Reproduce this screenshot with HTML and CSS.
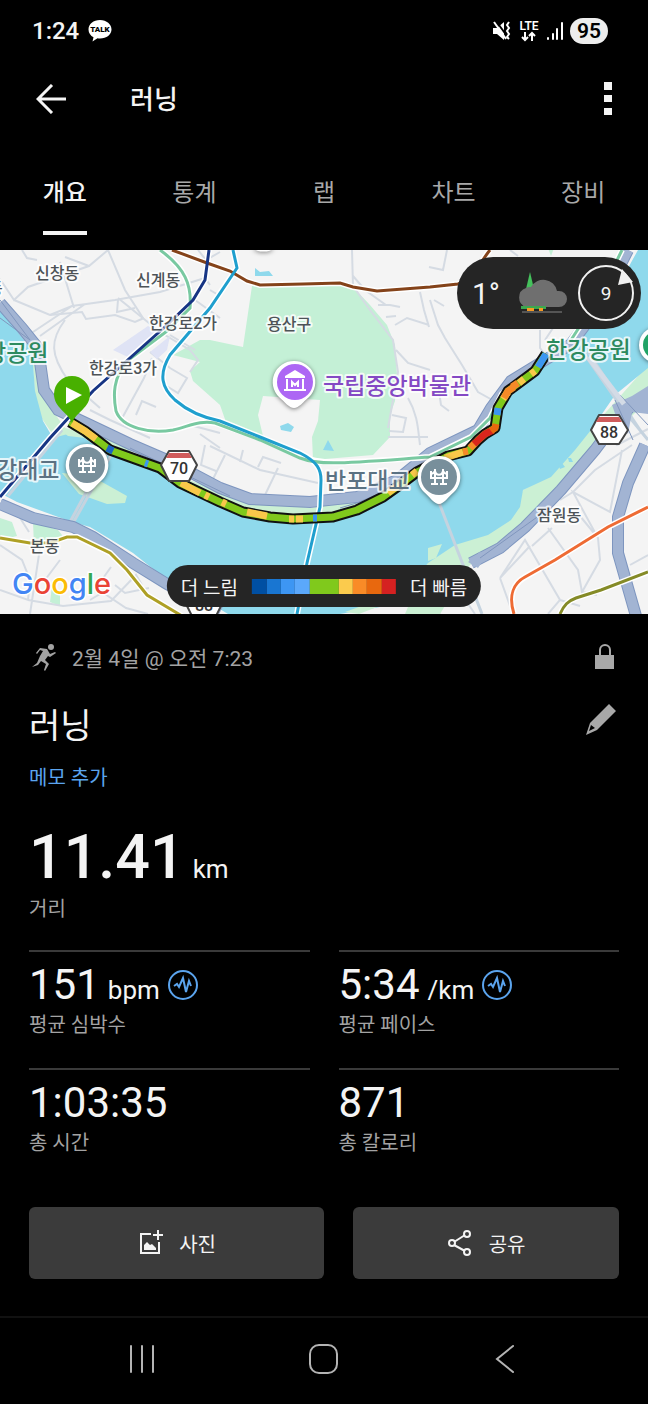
FILE: index.html
```html
<!DOCTYPE html>
<html lang="ko">
<head>
  <meta charset="UTF-8">
  <meta name="viewport" content="width=device-width, initial-scale=1.0">
  <title>러닝</title>
  <link rel="stylesheet" href="styles.css">
</head>
<body>
  <div class="status-bar">
    <span class="time">1:24</span>
    <svg class="talk" width="24" height="24" viewBox="0 0 24 24">
      <path d="M12 1C5.400 1 0.500 5 0.500 10.500c0 3.400 2 6.200 5 7.800L4.500 22.500l5-3.300c.8.100 1.600.2 2.500.2 6.600 0 11.500-4 11.500-9S18.600 1 12 1z" fill="#fff"/>
      <text x="12" y="13" text-anchor="middle">TALK</text>
    </svg>
    <div class="status-icons">
      <svg width="20" height="22" viewBox="0 0 20 22" fill="none" stroke="#fff">
        <path d="M1 8h4l7-6v18l-7-6H1z" fill="#fff" stroke="none"/>
        <path d="M4 1l11 15" stroke="#000" stroke-width="2"/>
        <path d="M2 2l12 17" stroke-width="2"/>
        <path d="M17 2l-2 3 2 3-2 3 2 3-2 3 2 2" stroke-width="2"/>
      </svg>
      <svg class="lte" width="22" height="24" viewBox="0 0 22 24" fill="none" stroke="#fff">
        <text x="11" y="11" text-anchor="middle">LTE</text>
        <path d="M7 13v8M4 18l3 3 3-3M14 22v-8M11 17l3-3 3 3" stroke-width="2"/>
      </svg>
      <svg width="18" height="20" viewBox="0 0 18 20" stroke="#fff" stroke-width="2" stroke-linecap="round">
        <path d="M2 17v1M7 13v5M11 8v10M16 2v16"/>
      </svg>
      <span class="battery">95</span>
    </div>
  </div>

  <header class="app-bar">
    <button class="icon-btn" aria-label="뒤로">
      <svg width="30" height="30" viewBox="0 0 30 30" fill="none" stroke="#f4f4f4" stroke-width="3">
        <path d="M16 1L2 15l14 14M2 15h28"/>
      </svg>
    </button>
    <h1>러닝</h1>
    <button class="icon-btn more" aria-label="더보기">
      <svg width="8" height="34" viewBox="0 0 8 34" fill="#f4f4f4">
        <path d="M0 0h8v8H0zM0 13h8v7H0zM0 26h8v7H0z"/>
      </svg>
    </button>
  </header>

  <nav class="tabs">
    <a href="#" class="active">개요</a>
    <a href="#">통계</a>
    <a href="#">랩</a>
    <a href="#">차트</a>
    <a href="#">장비</a>
  </nav>

  <section class="map">
    <svg class="map-canvas" viewBox="0 250 648 364">
      <rect y="250" width="648" height="364" fill="#f4f4f4"/>

      <!-- Parks -->
      <g fill="#c4f0d6">
        <path d="M252 286L260 286 340 284 353 287 370 305 387 325 395 345 397 375 395 401 390 415 390 437 373 455 313 460 312 437 318 421 320 400 263 396 258 415 263 436 227 425 220 405 193 381 190 371 200 362 173 355 200 340 210 340 243 347z"/>
        <path d="M0 518l12 4 5 14-17 4zM33 522l25 8 8 10-32 6zM52 586l8 4v16l-10-4z"/>
        <path d="M548 248h6l-3 8z"/>
      </g>

      <!-- Small streets -->
      <g class="streets">
        <path d="M0 279L14 300 28 287 89 266 108 250M22 250l5 8 10 2M60 262L74 308M89 266L65 257M108 250L125 290 143 318M14 300L50 315 82 312 86 319 115 315 135 322 144 318"/>
        <path d="M50 315L72 306 115 300 160 292 205 278 210 285M118 300l-1 12 18-4M30 334L72 306M40 336L85 304M65 320C50 340 50 355 68 380L100 408M118 298L160 332 190 350 198 360 190 372"/>
        <path d="M150 352L170 368 187 378 178 393 165 385M152 358l-8 20-24 44M136 415l6-14 14 6M170 335l25 15M195 300L220 318M198 250l8 10 14-8M210 290l10 6"/>
        <path d="M352 250L353 286 370 310 393 340 398 372 388 428M353 276L365 290 386 305M378 305h12l10 2M386 317l10-1M396 350L408 363 430 370M395 325l12-7 22 7M420 292l4 18 5 17M408 398C418 415 418 430 420 445M392 415l14 3-3 14-14-1M388 437l40 0"/>
        <path d="M430 300L438 325 445 338 462 365 478 392 496 402M434 300l10 6M438 385l3 20 8 6M429 267l14 3 4-20M510 250l8 6M540 330v18l6 8M545 340l10-15"/>
        <path d="M210 446L260 470 318 483M225 455l-15 30M240 462l3-12M258 467l5-10 18 6M278 468l-13 27M90 410l20 10 40 18M190 425l30 8M200 434l20 14M205 445l-4 20 15 6"/>
        <path d="M0 545L22 560 30 580 28 600 0 590M40 548L30 614M28 600l35 6 48-5 25-26 6 10M111 567L96 588M115 585l10 8 24-5M96 588l30 20 22 6M60 560l-15 20M15 510l14 22M90 600l20-12"/>
        <path d="M440 563L475 614M430 600l10 14M500 578L525 540 560 600 548 614M500 578l13 36M500 578l30-32M548 528L578 570 582 592 600 560 598 538 573 492 610 512 622 450M573 492L595 470 632 445M560 500l13-8M582 592l15 3M598 538l-18-22M560 600l20 6M630 565l18-10M552 528l-20 18M605 435l12 10 31-16"/>
      </g>
      <path d="M113 350L148 326 160 333 130 358zM150 352l20-16-3 14-10 9z" fill="#dfe3f5"/>

      <!-- Riverbank -->
      <g fill="#cbf0d4">
        <path d="M32 350L45 400 65 428 120 440 150 470 60 445 36 410zM110 452L240 498 310 508 390 495 380 506 300 516 200 500z"/>
        <path d="M405 614L428 560 455 543 488 533 511 518 523 490 551 475 590 430 648 365V400L600 448 540 512 470 565 440 614z"/>
      </g>

      <!-- Han river -->
      <path class="water" d="M0 306L20 335 32 350 35 391 43 421 53 438 75 432 110 455 160 473 220 503 270 519 333 519 383 500 417 475 448 460 475 450 493 432 500 410 508 395 545 365 581 338 600 310 628 268 638 250H648V368L615 395 591 430 575 450 551 477 523 490 520 507 511 520 488 535 455 545 428 563 405 590 380 607 340 614H228L205 600 167 580 133 553 90 527 72 522 17 502 0 493z"/>
      <path class="water" d="M255 268l5 4 9-1 4 5h-18zM280 426l8-3 6 4-3 5-10-2zM323 450l5-10 6 11z"/>
      <path d="M62 473l20 2 20 7 25 14-2 7-18 1-28-10z" fill="#cbf0d4"/>
      <path d="M60 430l20 0 14 9-26-3zM428 548l14-4-6 14-8 3zM345 612l22-8 10 3-18 7z" fill="#cbf0d4"/>
      <path d="M558 464l4-1 3 4-5 2zM568 458l3 0 2 4-4 0z" fill="#8fd9ec"/>

      <!-- Bridges -->
      <g class="bridge">
        <path d="M115 448L72 525M110 448L70 522M438 500L482 614M585 355L622 408 648 440M588 352L640 430M62 430L8 496"/>
      </g>

      <!-- Riverside highways -->
      <g class="highway-edge">
        <path d="M0 303L22 328 38 348 44 390 58 410 90 425 130 444 167 460 220 488 250 499 310 502 357 497 397 480 430 453 478 430 491 408 511 381 545 360 571 344 600 305 628 250"/>
        <path d="M0 504L33 518 73 527 93 537 133 563 167 584 220 612"/>
        <path d="M471 563L500 548 525 527 561 490 595 450 610 430 630 407 648 395"/>
        <path d="M645 445L628 483 618 517 618 553 636 616"/>
      </g>
      <g class="highway">
        <path d="M0 303L22 328 38 348 44 390 58 410 90 425 130 444 167 460 220 488 250 499 310 502 357 497 397 480 430 453 478 430 491 408 511 381 545 360 571 344 600 305 628 250"/>
        <path d="M0 504L33 518 73 527 93 537 133 563 167 584 220 612"/>
        <path d="M471 563L500 548 525 527 561 490 595 450 610 430 630 407 648 395"/>
        <path d="M645 445L628 483 618 517 618 553 636 616"/>
      </g>
      <path d="M612 405l20-9 16-10v28l-16-2-4 22-10-12zM468 562l12-10 6 4-8 12z" fill="#a2b4d3"/>
      <path class="highway-line" d="M0 318L30 340 0 300M130 448L230 496M340 508L400 490M480 558L540 515M620 395l28 30M615 400l18 40"/>
      <path class="bridge-top" d="M588 357L624 404"/>

      <!-- Subway lines -->
      <g class="rail-edge">
        <path d="M160 250C185 268 192 285 190 308L167 331 127 361C113 378 113 395 116 411 122 428 150 434 173 430 190 426 200 420 215 423L260 438 300 456C320 466 345 463 430 457L471 437 490 418 502 394 520 380M571 340L600 295 622 250"/>
        <path d="M172 250L207 263 230 271 247 281 260 285 303 284 340 283 353 287 377 291 430 287 458 284C475 278 480 262 490 250"/>
        <path d="M209 250L205 280 193 300 167 325 93 391 50 438 0 497"/>
        <path d="M233 250L237 268 210 308 170 355C158 375 162 388 175 400 190 413 205 418 220 421L260 437 300 453C318 462 321 470 321 480L320 507 307 563 297 614"/>
        <path d="M0 538L30 543 50 543 67 537 77 537 110 553 127 570 147 595 182 616"/>
        <path d="M514 614C508 595 514 583 525 577L555 560 608 527 648 507M560 614C564 605 568 601 576 598L601 590 648 572"/>
      </g>
      <g class="rail">
        <path stroke="#79c9a1" d="M160 250C185 268 192 285 190 308L167 331 127 361C113 378 113 395 116 411 122 428 150 434 173 430 190 426 200 420 215 423L260 440 300 458C320 466 345 463 430 457L471 437 490 418 502 394 520 380M571 340L600 295 622 250"/>
        <path stroke="#84431a" d="M172 250L207 263 230 271 247 281 260 285 303 284 340 283 353 287 377 291 430 287 458 284C475 278 480 262 490 250"/>
        <path stroke="#173584" d="M209 250L205 280 193 300 167 325 93 391 50 438 0 497"/>
        <path stroke="#1f9fce" d="M233 250L237 268 210 308 170 355C158 375 162 388 175 400 190 413 205 418 220 421L260 437 300 453C318 462 321 470 321 480L320 507 307 563 297 614"/>
        <path stroke="#aea025" d="M0 538L30 543 50 543 67 537 77 537 110 553 127 570 147 595 182 616"/>
        <path stroke="#ee6b34" d="M514 614C508 595 514 583 525 577L555 560 608 527 648 507"/>
        <path stroke="#858b27" d="M560 614C564 605 568 601 576 598L601 590 648 572"/>
      </g>

      <!-- Running track, coloured by pace -->
      <path class="track-edge" d="M70 422L85 431 97 440 110 450 160 468 180 483 220 502 243 512 270 517 293 519 333 517 357 510 383 497 397 487 417 472 448 456 468 451 478 440 485 434 495 428 498 408 508 391 535 371 546 354"/>
      <path class="track" d="M70 422L85 431 97 440 110 450 160 468 180 483 220 502 243 512 270 517 293 519 333 517 357 510 383 497 397 487 417 472 448 456 468 451 478 440 485 434 495 428 498 408 508 391 535 371 546 354"/>
      <g class="pace">
        <g stroke="#f9c84a">
          <path d="M72 423L85 431 96 439M181 483L200 493M205 495l4 2M222 502l4 2M247 512L267 516M289 519h5M296 519h7M388 493L399 485M412 475l5-4M445 458L463 452M503 399l5-7M519 383l5-4M531 374l4-3"/>
        </g>
        <g stroke="#f68a28">
          <path d="M463 452l5-1M504 398l4-7 6-4M512 387l6-4M470 448l5-5"/>
        </g>
        <g stroke="#d9261c">
          <path d="M474 444L485 434 493 430"/>
        </g>
        <g stroke="#e8680e">
          <path d="M491 431l4-3 1-4"/>
        </g>
        <g stroke="#3c96f2">
          <path d="M145 463l3 1M313 518l4 0M497 415l1-7M538 367L546 354"/>
        </g>
        <path stroke="#1c64c4" d="M107 448L113 451"/>
      </g>

      <!-- Place names -->
      <g class="label">
        <text x="35" y="279">신창동</text>
        <text x="136" y="286">신계동</text>
        <text x="149" y="329">한강로2가</text>
        <text x="89" y="374">한강로3가</text>
        <text x="267" y="330">용산구</text>
        <text x="537" y="521">잠원동</text>
        <text x="30" y="552">본동</text>
        <text x="-12" y="294">동</text>
      </g>
      <g class="label park">
        <text x="-15" y="361">강공원</text>
        <text x="546" y="358">한강공원</text>
      </g>
      <text class="label museum" x="323" y="394">국립중앙박물관</text>
      <g class="label bridge-name">
        <text x="-4" y="478">강대교</text>
        <text x="325" y="489">반포대교</text>
      </g>

      <!-- Place pins -->
      <g class="pin">
        <path d="M294 361a21 21 0 0 1 15 36c-6 5-10 11-15 11s-9-6-15-11a21 21 0 0 1 15-36z"/>
        <path d="M87 444a21 21 0 0 1 15 36c-6 5-10 12-15 12s-9-7-15-12a21 21 0 0 1 15-36z"/>
        <path d="M439 456a21 21 0 0 1 15 36c-6 5-10 12-15 12s-9-7-15-12a21 21 0 0 1 15-36z"/>
        <path d="M253 248a12 7 0 0 0 21 0z"/>
        <circle cx="657" cy="345" r="18"/>
      </g>
      <circle cx="295" cy="382" r="18" fill="#ad67f4"/>
      <path d="M295 370l10 6v2h-20v-2zM286 379h2v10h-2zM302 379h2v10h-2zM284 389h22v2h-22z" fill="#fff"/>
      <path d="M292 387v-5l3 3 3-3v5" fill="none" stroke="#fff" stroke-width="2"/>
      <circle cx="87" cy="465" r="18" fill="#788f9b"/>
      <circle cx="439" cy="477" r="18" fill="#788f9b"/>
      <g fill="none" stroke="#fff" stroke-width="2">
        <path id="bridgeIcon" d="M83 457v14M91 457v14M78 466h18M79 472h7M88 472h7M79 459c0 4 2 3 4 0M83 459c1 5 7 5 8 0M91 459c2 3 4 4 4 0M79 459v7M95 459v7"/>
        <use href="#bridgeIcon" x="352" y="12"/>
      </g>
      <circle cx="657" cy="345" r="14" fill="#21a366"/>

      <!-- Route shields -->
      <g class="shield">
        <path d="M169 451h20l8 14-8 16h-20l-8-16z"/>
        <path d="M599 415h20l9 15-9 14h-20l-8-14z"/>
        <path d="M194 590h20l8 14-8 16h-20l-8-16z"/>
        <text x="179" y="474">70</text>
        <text x="609" y="438">88</text>
        <text x="204" y="611">88</text>
      </g>
      <path d="M169 453h20l3 5h-26zM599 417h20l3 5h-26z" fill="#d05c5c"/>

      <!-- Start marker -->
      <path d="M72 423C68 412 54 408 54 394a18 18 0 0 1 36 0c0 14-14 18-18 29z" fill="#48b000"/>
      <path d="M66 387l16 8-16 9z" fill="#fff"/>

      <text class="google" x="12" y="594"><tspan fill="#4285f4">G</tspan><tspan fill="#ea4335">o</tspan><tspan fill="#fbbc05">o</tspan><tspan fill="#4285f4">g</tspan><tspan fill="#34a853">l</tspan><tspan fill="#ea4335">e</tspan></text>
    </svg>

    <div class="weather">
      <span class="temp">1°</span>
      <svg width="52" height="44" viewBox="0 0 52 44">
        <path d="M15 1l4 17h-8z" fill="#45c15c"/>
        <path d="M11 36a10 10 0 0 1 0-19 8 8 0 0 1 5-1 14 14 0 0 1 26 4h2a8 8 0 0 1 0 16z" fill="#6f6f6f"/>
        <path d="M6 35h25v3H6z" fill="#3da74e"/>
        <path d="M12 37h7v3h-7zM24 37h4v3h-4z" fill="#f59a23"/>
        <path d="M7 41h40" stroke="#555" stroke-width="2"/>
      </svg>
      <svg class="wind" width="58" height="58" viewBox="0 0 58 58">
        <circle cx="29" cy="29" r="27" fill="none" stroke="#f1f1f1" stroke-width="2"/>
        <path d="M45 5l11 13-15 3z" fill="#f1f1f1"/>
        <text x="29" y="36" text-anchor="middle">9</text>
      </svg>
    </div>

    <div class="legend">
      <span>더 느림</span>
      <div class="scale">
        <i class="s1"></i><i class="s2"></i><i class="s3"></i><i class="s4"></i><i class="s5"></i>
        <i class="s6"></i><i class="s7"></i><i class="s8"></i><i class="s9"></i>
      </div>
      <span>더 빠름</span>
    </div>
  </section>

  <main>
    <div class="row meta">
      <svg width="28" height="28" viewBox="0 0 28 28" fill="#a3a3a3">
        <circle cx="22" cy="4" r="3"/>
        <path d="M11 5l7 1 3 5 5-2 1 1-6 4-2-1-3 4 4 4-4 7-1-1 2-6-5-3-3 4-6 2 5-4 3-7 3-5-3-1-3 4-1-1z"/>
      </svg>
      <span>2월 4일 @ 오전 7:23</span>
      <svg class="end" width="30" height="28" viewBox="0 0 30 28">
        <path d="M6 12h19v14H6z" fill="#a8a8a8"/>
        <path d="M11 13V7a5 5 0 0 1 10 0v6" fill="none" stroke="#a8a8a8" stroke-width="2"/>
      </svg>
    </div>

    <div class="row title">
      <h2>러닝</h2>
      <button class="icon-btn end" aria-label="편집">
        <svg width="34" height="32" viewBox="0 0 34 32" fill="#a8a8a8">
          <path fill-rule="evenodd" d="M24 1l7 7-19 19-11 5 4-12zM6 22l-2 6 6-3z"/>
        </svg>
      </button>
    </div>

    <a href="#" class="memo">메모 추가</a>

    <div class="distance">
      <div class="value"><strong>11.41</strong> <small>km</small></div>
      <div class="name">거리</div>
    </div>

    <div class="stats">
      <div class="stat">
        <div class="value">151 <small>bpm</small>
          <svg width="30" height="30" viewBox="0 0 30 30" fill="none" stroke="#5ba4ee" stroke-width="2">
            <circle cx="15" cy="15" r="14"/>
            <path d="M6 16l3-2 2 3 4-9 3 14 3-11 2 5"/>
          </svg>
        </div>
        <div class="name">평균 심박수</div>
      </div>
      <div class="stat">
        <div class="value">5:34 <small>/km</small>
          <svg width="30" height="30" viewBox="0 0 30 30" fill="none" stroke="#5ba4ee" stroke-width="2">
            <circle cx="15" cy="15" r="14"/>
            <path d="M6 16l3-2 2 3 4-9 3 14 3-11 2 5"/>
          </svg>
        </div>
        <div class="name">평균 페이스</div>
      </div>
      <div class="stat">
        <div class="value">1:03:35</div>
        <div class="name">총 시간</div>
      </div>
      <div class="stat">
        <div class="value">871</div>
        <div class="name">총 칼로리</div>
      </div>
    </div>

    <div class="actions">
      <button>
        <svg width="26" height="26" viewBox="0 0 26 26" fill="none" stroke="#f4f4f4" stroke-width="2">
          <path d="M14 4H4v19h18V12M21 0v10M16 5h10"/>
          <path d="M7 20v-5l3-3 3 3 2-1 4 4v2z" fill="#f4f4f4" stroke="none"/>
        </svg>
        사진
      </button>
      <button>
        <svg width="26" height="26" viewBox="0 0 26 26" fill="none" stroke="#f4f4f4" stroke-width="2">
          <path d="M7 12l11-7M7 15l11 6"/>
          <circle cx="5" cy="13" r="3"/>
          <circle cx="20" cy="4" r="3"/>
          <circle cx="20" cy="22" r="3"/>
        </svg>
        공유
      </button>
    </div>
  </main>

  <footer class="nav-bar">
    <button class="icon-btn" aria-label="최근 앱">
      <svg width="30" height="30" viewBox="0 0 30 30" stroke="#b4b4b4" stroke-width="2" stroke-linecap="round">
        <path d="M4 2v26M15 2v26M26 2v26"/>
      </svg>
    </button>
    <button class="icon-btn" aria-label="홈">
      <svg width="30" height="30" viewBox="0 0 30 30" fill="none" stroke="#b4b4b4" stroke-width="2">
        <rect x="1" y="1" width="27" height="28" rx="9"/>
      </svg>
    </button>
    <button class="icon-btn" aria-label="이전">
      <svg width="30" height="30" viewBox="0 0 30 30" fill="none" stroke="#b4b4b4" stroke-width="2" stroke-linecap="round">
        <path d="M22 2L6 15l16 13"/>
      </svg>
    </button>
  </footer>
</body>
</html>
```
FILE: styles.css
```css
* {
  margin: 0;
  padding: 0;
  box-sizing: border-box;
}

body {
  font-family: Roboto, "Noto Sans CJK KR", sans-serif;
  font-size: 20px;
  background: #000;
  color: #f4f4f4;
  min-height: 100vh;
  display: flex;
  flex-direction: column;
}

svg {
  display: block;
  flex-shrink: 0;
}

button {
  font: inherit;
  color: inherit;
  border: none;
  cursor: pointer;
}

a {
  text-decoration: none;
}

.icon-btn {
  display: flex;
  background: none;
}


.status-bar {
  display: flex;
  align-items: center;
  gap: 9px;
  height: 62px;
  padding: 0 40px 0 32px;
}

.time {
  font-size: 24px;
  font-weight: 500;
}

.talk text {
  font-size: 8px;
  font-weight: 900;
  fill: #000;
}

.status-icons {
  display: flex;
  align-items: center;
  gap: 6px;
  margin-left: auto;
}

.lte text {
  font-size: 12px;
  font-weight: 600;
  fill: #fff;
  stroke: none;
}

.battery {
  background: #ededed;
  color: #000;
  font-size: 21px;
  font-weight: 600;
  line-height: 26px;
  padding: 0 7px;
  border-radius: 13px;
}


.app-bar {
  display: flex;
  align-items: center;
  height: 74px;
  padding: 0 36px;
}

.app-bar h1 {
  font-size: 26px;
  font-weight: 500;
  margin-left: 64px;
  padding-bottom: 4px;
}

.more {
  margin-left: auto;
}


.tabs {
  display: grid;
  grid-template-columns: repeat(5, 1fr);
  justify-items: center;
  height: 114px;
  padding-top: 28px;
}

.tabs a {
  font-size: 24px;
  line-height: 58px;
  height: 71px;
  color: #a8a8a8;
}

.tabs .active {
  color: #f4f4f4;
  font-weight: 500;
  border-bottom: 4px solid #f4f4f4;
}


.map {
  position: relative;
}

.map-canvas {
  width: 100%;
  height: auto;
}

.streets {
  fill: none;
  stroke: #d5dbe3;
  stroke-width: 2;
}

.water {
  fill: #8fd9ec;
}

.bridge {
  fill: none;
  stroke: #c5d3df;
  stroke-width: 3;
}

.bridge-top {
  stroke: #d3dbe6;
  stroke-width: 5;
}

.highway-edge {
  fill: none;
  stroke: #7d95bf;
  stroke-width: 12;
}

.highway {
  fill: none;
  stroke: #a2b4d3;
  stroke-width: 10;
}

.highway-line {
  fill: none;
  stroke: #8096bd;
  stroke-width: 1;
}

.rail-edge {
  fill: none;
  stroke: #fff;
  stroke-width: 6;
}

.rail {
  fill: none;
  stroke-width: 3;
}

.track-edge {
  fill: none;
  stroke: #111;
  stroke-width: 11;
  stroke-linejoin: round;
}

.track {
  fill: none;
  stroke: #80c91c;
  stroke-width: 7;
  stroke-linejoin: round;
}

.pace {
  fill: none;
  stroke-width: 7;
}

.label {
  font-size: 16px;
  font-weight: 500;
  fill: #4d5357;
  stroke: rgba(255, 255, 255, 0.8);
  stroke-width: 4;
  stroke-linejoin: round;
  paint-order: stroke;
}

.park,
.museum,
.bridge-name {
  font-size: 23px;
  font-weight: 500;
}

.park {
  fill: #2c8a5f;
}

.museum {
  fill: #8449c4;
}

.bridge-name {
  fill: #5b7283;
}

.pin {
  fill: #fff;
  filter: drop-shadow(0 1px 2px rgba(0, 0, 0, 0.5));
}

.shield {
  fill: #fff;
  stroke: #444;
  stroke-width: 2;
  stroke-linejoin: round;
}

.shield text {
  font-size: 16px;
  font-weight: 500;
  text-anchor: middle;
  fill: #333;
  stroke: none;
}

.google {
  font-family: Inter, sans-serif;
  font-size: 29px;
  font-weight: 500;
  stroke: #fff;
  stroke-width: 3;
  paint-order: stroke;
}

.weather {
  position: absolute;
  top: 7px;
  right: 7px;
  display: flex;
  align-items: center;
  gap: 10px;
  height: 72px;
  padding: 0 6px 0 15px;
  border-radius: 36px;
  background: #252525;
}

.temp {
  font-size: 30px;
  margin-right: 5px;
}

.wind text {
  font-size: 19px;
  fill: #f4f4f4;
}

.legend {
  position: absolute;
  left: 50%;
  bottom: 7px;
  transform: translateX(-50%);
  display: flex;
  align-items: center;
  gap: 14px;
  height: 42px;
  padding: 0 14px;
  border-radius: 21px;
  background: #252525;
  font-size: 19px;
  white-space: nowrap;
}

.scale {
  display: grid;
  grid-template-columns: 1fr 1fr 1fr 1fr 2fr 1fr 1fr 1fr 1fr;
  width: 144px;
  height: 15px;
}

.s1 { background: #004fa3; }
.s2 { background: #1976d2; }
.s3 { background: #3d96f3; }
.s4 { background: #5ba8fb; }
.s5 { background: #80c91c; }
.s6 { background: #fbcb4d; }
.s7 { background: #f98b27; }
.s8 { background: #e8680e; }
.s9 { background: #d52121; }


main {
  padding: 28px 29px 37px;
}

.row {
  display: flex;
  align-items: center;
}

.end {
  margin-left: auto;
}

.meta {
  color: #a3a3a3;
  font-size: 21px;
  height: 30px;
  gap: 15px;
}

.title {
  height: 64px;
  margin-top: 19px;
}

.title h2 {
  font-size: 34px;
  font-weight: 400;
}

.title .icon-btn {
  margin-bottom: 8px;
}

.memo {
  display: block;
  color: #5ba4ee;
  line-height: 30px;
  margin-top: 8px;
}

.value {
  line-height: 48px;
  display: flex;
  align-items: baseline;
  gap: 8px;
}

.value small {
  font-size: 26px;
}

.value svg {
  align-self: center;
}

.name {
  color: #a3a3a3;
  line-height: 30px;
}

.distance {
  margin-top: 39px;
  margin-bottom: 26px;
}

.distance .value {
  font-size: 61px;
  line-height: 50px;
}

.distance strong {
  font-weight: 500;
}

.stats {
  display: grid;
  grid-template-columns: 1fr 1fr;
  column-gap: 29px;
}

.stat {
  height: 118px;
  padding-top: 9px;
  border-top: 2px solid #3a3a3a;
}

.stat .value {
  font-size: 42px;
}

.stat small {
  line-height: 30px;
}

.stat .name {
  margin-top: 1px;
}

.actions {
  display: grid;
  grid-template-columns: 10fr 9fr;
  gap: 29px;
  margin-top: 21px;
}

.actions button {
  display: flex;
  align-items: center;
  justify-content: center;
  gap: 16px;
  height: 72px;
  border-radius: 6px;
  background: #3b3b3b;
}


.nav-bar {
  flex: 1;
  display: grid;
  grid-template-columns: repeat(3, 1fr);
  justify-items: center;
  align-items: center;
  padding: 0 51px 4px;
  border-top: 2px solid #111;
}
```
